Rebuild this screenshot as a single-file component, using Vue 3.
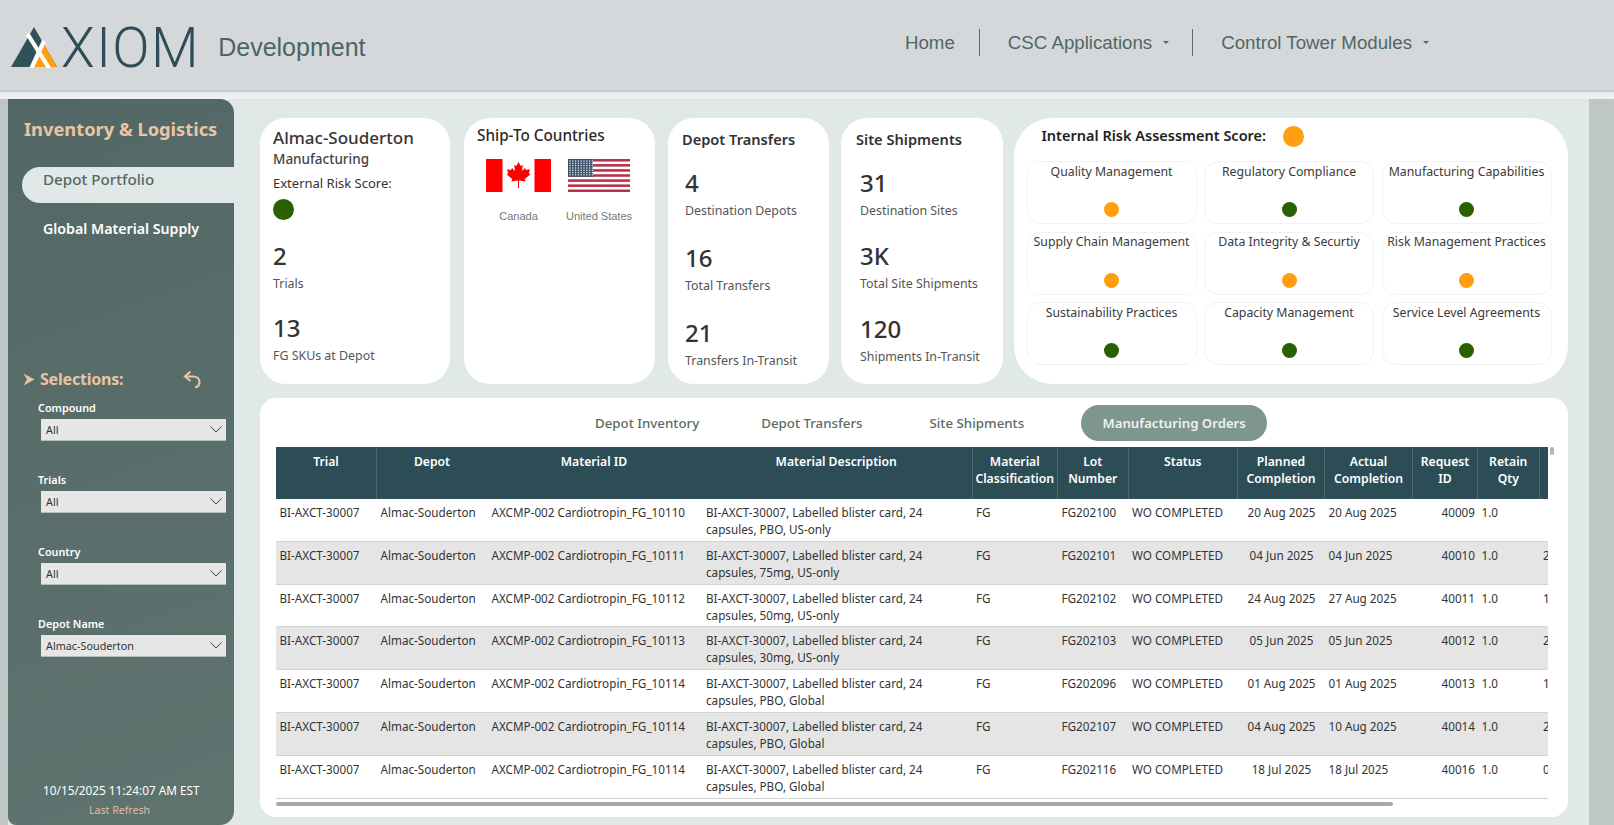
<script setup>
const navItems = [
  { label: 'Home', caret: false },
  { label: 'CSC Applications', caret: true },
  { label: 'Control Tower Modules', caret: true },
]
const filters = [
  { label: 'Compound', value: 'All' },
  { label: 'Trials', value: 'All' },
  { label: 'Country', value: 'All' },
  { label: 'Depot Name', value: 'Almac-Souderton' },
]
const G = '#2a6000'
const O = '#ff9e0f'
const risks = [
  ['Quality Management', O], ['Regulatory Compliance', G], ['Manufacturing Capabilities', G],
  ['Supply Chain Management', O], ['Data Integrity & Securtiy', O], ['Risk Management Practices', O],
  ['Sustainability Practices', G], ['Capacity Management', G], ['Service Level Agreements', G],
]
const transfers = [['4', 'Destination Depots'], ['16', 'Total Transfers'], ['21', 'Transfers In-Transit']]
const shipments = [['31', 'Destination Sites'], ['3K', 'Total Site Shipments'], ['120', 'Shipments In-Transit']]
const tabs = ['Depot Inventory', 'Depot Transfers', 'Site Shipments', 'Manufacturing Orders']
const headers = [
  ['Trial'], ['Depot'], ['Material ID'], ['Material Description'], ['Material', 'Classification'],
  ['Lot', 'Number'], ['Status'], ['Planned', 'Completion'], ['Actual', 'Completion'], ['Request', 'ID'], ['Retain', 'Qty'], [''],
]
const rows = [
  ['10110', 'PBO, US-only', 'FG202100', '20 Aug 2025', '20 Aug 2025', '40009', ''],
  ['10111', '75mg, US-only', 'FG202101', '04 Jun 2025', '04 Jun 2025', '40010', '2'],
  ['10112', '50mg, US-only', 'FG202102', '24 Aug 2025', '27 Aug 2025', '40011', '1'],
  ['10113', '30mg, US-only', 'FG202103', '05 Jun 2025', '05 Jun 2025', '40012', '2'],
  ['10114', 'PBO, Global', 'FG202096', '01 Aug 2025', '01 Aug 2025', '40013', '1'],
  ['10114', 'PBO, Global', 'FG202107', '04 Aug 2025', '10 Aug 2025', '40014', '2'],
  ['10114', 'PBO, Global', 'FG202116', '18 Jul 2025', '18 Jul 2025', '40016', '0'],
]
const usStripes = [0, 1, 2, 3, 4, 5, 6]
const usStars = []
for (let r = 0; r < 7; r++) for (let c = 0; c < 9; c++) usStars.push([2 + c * 2.8, 2 + r * 2.3])
</script>

<template>
  <div class="page">
    <header class="top">
      <div class="brand">
        <svg class="mark" width="48" height="42" viewBox="10 26 48 42">
          <polygon points="34,27 11,67 57,67" fill="#30505a" />
          <polygon points="43.2,43 57,67 32,67" fill="#ff9e0f" />
          <line x1="27.5" y1="34" x2="49" y2="68" stroke="#fff" stroke-width="4.2" />
          <line x1="44" y1="41" x2="31.5" y2="68" stroke="#fff" stroke-width="4.2" />
        </svg>
        <span class="xiom">XIOM</span>
        <span class="env">Development</span>
      </div>
      <nav class="nav">
        <template v-for="(n, i) in navItems" :key="n.label">
          <span v-if="i" class="nav-sep"></span>
          <span class="nav-item">{{ n.label }}<i v-if="n.caret" class="caret"></i></span>
        </template>
      </nav>
    </header>
    <div class="band"></div>

    <div class="body">
      <aside class="side">
        <h2 class="side-title">Inventory &amp; Logistics</h2>
        <div class="pill">Depot Portfolio</div>
        <div class="side-link">Global Material Supply</div>
        <div class="sel-head">
          <svg width="12" height="13" viewBox="0 0 12 13"><path d="M0.5 0.5 L11.5 6.5 L0.5 12.5 L4 6.5 Z" fill="#e8c4a6" /></svg>
          <span class="sel-title">Selections:</span>
          <svg class="undo" width="18" height="19" viewBox="0 0 18 19" fill="none" stroke="#e8c4a6" stroke-width="2.2">
            <path d="M7.5 1.5 L2 6.5 L7.5 11" />
            <path d="M2 6.5 H10 C14 6.5 16.500 9 16.500 12 C16.500 15 14.500 17 12 17.500" />
          </svg>
        </div>
        <div v-for="f in filters" :key="f.label" class="filter">
          <label class="f-label">{{ f.label }}</label>
          <div class="f-box">
            <span>{{ f.value }}</span>
            <svg width="12" height="7" viewBox="0 0 12 7" fill="none" stroke="#444" stroke-width="1"><path d="M0.5 0.5 L6 6 L11.500 0.5" /></svg>
          </div>
        </div>
        <div class="stamp">10/15/2025 11:24:07 AM EST</div>
        <div class="refresh">Last Refresh</div>
      </aside>

      <main class="main">
        <section class="cards">
          <div class="card c1">
            <div class="site">Almac-Souderton</div>
            <div class="site-sub">Manufacturing</div>
            <div class="ext">External Risk Score:</div>
            <span class="dot-lg"></span>
            <div class="num n1">2</div>
            <div class="cap">Trials</div>
            <div class="num n2">13</div>
            <div class="cap">FG SKUs at Depot</div>
          </div>

          <div class="card c2">
            <div class="ship">Ship-To Countries</div>
            <div class="flags">
              <div class="flag">
                <svg width="65" height="33" viewBox="0 0 65 33">
                  <rect width="65" height="33" fill="#fff" />
                  <rect width="16.500" height="33" fill="#f00" />
                  <rect x="48.500" width="16.500" height="33" fill="#f00" />
                  <path d="M32.500 3 L34.800 7 L36.800 6 L36 12 L39 9 L40 11 L44 10.300 L42.800 14.500 L44.500 15.300 L38.800 20 L39.500 22.500 L33 21.500 L33 29 L32 29 L32 21.500 L25.500 22.500 L26.200 20 L20.500 15.300 L22.200 14.500 L21 10.300 L25 11 L26 9 L29 12 L28.200 6 L30.200 7 Z" fill="#f00" />
                </svg>
                <span>Canada</span>
              </div>
              <div class="flag us">
                <svg width="62" height="33" viewBox="0 0 62 33">
                  <rect width="62" height="33" fill="#fff" />
                  <rect v-for="s in usStripes" :key="s" :y="s * 5.08" width="62" height="2.540" fill="#b8304a" />
                  <rect width="25" height="17.800" fill="#3a5068" />
                  <circle v-for="(p, i) in usStars" :key="i" :cx="p[0]" :cy="p[1]" r="0.750" fill="#e8eef0" />
                </svg>
                <span>United States</span>
              </div>
            </div>
          </div>

          <div class="card c3">
            <div class="k-title">Depot Transfers</div>
            <div v-for="t in transfers" :key="t[1]" class="kpi">
              <div class="num">{{ t[0] }}</div>
              <div class="cap">{{ t[1] }}</div>
            </div>
          </div>

          <div class="card c4">
            <div class="k-title">Site Shipments</div>
            <div v-for="t in shipments" :key="t[1]" class="kpi">
              <div class="num">{{ t[0] }}</div>
              <div class="cap">{{ t[1] }}</div>
            </div>
          </div>

          <div class="card c5">
            <div class="risk-head">
              <span>Internal Risk Assessment Score:</span>
              <i class="risk-dot"></i>
            </div>
            <div class="risk-grid">
              <div v-for="r in risks" :key="r[0]" class="tile">
                <span>{{ r[0] }}</span>
                <i :style="{ background: r[1] }"></i>
              </div>
            </div>
          </div>
        </section>

        <section class="panel">
          <div class="tabs">
            <span v-for="t in tabs" :key="t" class="tab" :class="{ active: t === 'Manufacturing Orders' }">{{ t }}</span>
          </div>
          <div class="tbl-wrap">
            <div class="tbl">
              <div class="row head">
                <div v-for="(h, i) in headers" :key="i" class="cell">
                  <span v-for="l in h" :key="l">{{ l }}</span>
                </div>
              </div>
              <div v-for="(r, i) in rows" :key="i" class="row item" :class="{ alt: i % 2 }">
                <div class="cell">BI-AXCT-30007</div>
                <div class="cell">Almac-Souderton</div>
                <div class="cell">AXCMP-002 Cardiotropin_FG_{{ r[0] }}</div>
                <div class="cell desc">BI-AXCT-30007, Labelled blister card, 24 capsules, {{ r[1] }}</div>
                <div class="cell">FG</div>
                <div class="cell">{{ r[2] }}</div>
                <div class="cell">WO COMPLETED</div>
                <div class="cell center">{{ r[3] }}</div>
                <div class="cell">{{ r[4] }}</div>
                <div class="cell right">{{ r[5] }}</div>
                <div class="cell">1.0</div>
                <div class="cell">{{ r[6] }}</div>
              </div>
            </div>
            <div class="vbar"></div>
          </div>
          <div class="hbar"><i></i></div>
        </section>
      </main>
      <div class="gutter"></div>
    </div>
  </div>
</template>

<style>
html, body { margin: 0; background: #e0e9e7; overflow: hidden; }
</style>

<style scoped>
.page { width: 1614px; height: 825px; display: flex; flex-direction: column; font-family: "Noto Sans", "Open Sans", sans-serif; color: #333; overflow: hidden; }
.top { height: 90px; flex: none; background: #d5d8db; display: flex; align-items: flex-start; border-bottom: 2px solid #c9cdcf; }
.band { height: 7px; flex: none; background: linear-gradient(#e6e8e9, #f0f2f2); }
.brand { display: flex; align-items: center; margin-left: 10px; height: 94px; }
.mark { flex: none; }
.xiom { font-family: Roboto, sans-serif; font-weight: 300; font-size: 55px; letter-spacing: 1.500px; color: #2e4e57; margin-left: 3px; line-height: 56px; padding-top: 1px; }
.env { font-family: "Liberation Sans", sans-serif; font-size: 25px; color: #4b6464; margin-left: 18px; }
.nav { display: flex; align-items: center; margin-left: auto; margin-right: 185px; margin-top: 29px; height: 27px; font-family: "Liberation Sans", sans-serif; font-size: 18.700px; color: #4f6862; }
.nav-item { display: inline-flex; align-items: center; }
.nav-item:first-child { margin-right: 1px; }
.nav-sep { width: 1px; height: 27px; background: #5b6d6a; margin: 0 28px 0 23px; }
.caret { width: 0; height: 0; border-left: 3.500px solid transparent; border-right: 3.500px solid transparent; border-top: 3px solid #4f6862; margin-left: 11px; }
.body { flex: 1; display: flex; min-height: 0; background: linear-gradient(90deg, #bfc6c6 8px, #e0e9e7 8px); }
.side { width: 226px; margin-left: 8px; flex: none; box-sizing: border-box; background: linear-gradient(160deg, #536866 0, #5f746f 100%); border-radius: 0 14px 14px 8px; display: flex; flex-direction: column; color: #fff; padding-top: 17px; }
.side-title { margin: 0 0 0 16px; font-size: 18.300px; font-weight: 700; color: #eac5a5; line-height: 26px; white-space: nowrap; }
.pill { margin: 25px 0 0 14px; height: 36px; background: #e0e9e7; border-radius: 18px 0 0 18px; color: #566764; font-size: 15.200px; font-weight: 500; line-height: 24px; padding-left: 21px; }
.side-link { margin: 16px 0 0 35px; font-weight: 600; font-size: 14.200px; line-height: 20px; }
.sel-head { display: flex; align-items: center; margin: 130px 0 6px 15px; height: 20px; }
.sel-title { color: #e8c4a6; font-weight: 700; font-size: 16px; margin-left: 5px; width: 143px; letter-spacing: -0.2px; }
.filter { margin-left: 30px; height: 72px; }
.f-label { display: block; font-size: 10.800px; font-weight: 600; line-height: 16px; margin-top: 5px; }
.f-box { margin: 3px 8px 0 3px; height: 22px; background: #e6e6e6; border-bottom: 1px solid #b5bcba; box-sizing: border-box; display: flex; align-items: center; justify-content: space-between; padding: 0 4px 0 5px; color: #333; font-size: 10.800px; }
.stamp { margin: auto 0 0 35px; font-size: 11.800px; line-height: 18px; white-space: nowrap; }
.refresh { margin: 4px 0 7px 0; padding-left: 81px; font-size: 10.600px; line-height: 15px; color: #e3bc9e; }
.main { width: 1330px; flex: none; padding: 19px 0 8px 26px; box-sizing: border-box; display: flex; flex-direction: column; gap: 14px; min-height: 0; }
.cards { display: flex; height: 266px; flex: none; }
.card { background: #fff; border-radius: 26px; box-sizing: border-box; flex: none; height: 266px; display: flex; flex-direction: column; }
.c1 { width: 190px; margin-right: 14px; padding: 8px 0 0 13px; }
.c2 { width: 191px; margin-right: 13px; padding: 7px 0 0 13px; }
.c3 { width: 161px; margin-right: 12px; padding: 11px 0 0 14px; }
.c4 { width: 162px; margin-right: 11px; padding: 11px 0 0 15px; }
.c5 { width: 554px; padding: 5px 12px 0 12.500px; border-radius: 38px; }
.site { font-size: 17px; font-weight: 500; line-height: 24px; color: #373332; }
.site-sub { font-size: 13.500px; font-weight: 500; line-height: 18px; color: #444; }
.ext { font-size: 13px; line-height: 18px; margin-top: 6px; color: #333; }
.dot-lg { width: 21px; height: 21px; border-radius: 50%; background: #2a6000; margin-top: 7px; display: block; }
.num { font-size: 24px; font-weight: 500; line-height: 32px; color: #333; }
.n1 { margin-top: 20px; }
.n2 { margin-top: 20px; }
.cap { font-size: 12.400px; line-height: 16px; color: #555; margin-top: 4px; white-space: nowrap; }
.ship { font-size: 15.300px; font-weight: 500; line-height: 20px; color: #2d2a28; white-space: nowrap; }
.flags { display: flex; margin: 14px 0 0 9px; gap: 15px; }
.flag { display: flex; flex-direction: column; align-items: center; }
.flag svg { display: block; }
.flag span { font-family: "Liberation Sans", sans-serif; font-size: 11px; color: #777; margin-top: 18px; white-space: nowrap; }
.k-title { font-size: 14.600px; font-weight: 600; line-height: 20px; color: #333; white-space: nowrap; margin-bottom: 18px; }
.kpi { margin-bottom: 23px; padding-left: 3px; }
.c4 .kpi { margin-bottom: 21px; padding-left: 4px; }
.kpi .cap { margin-top: 4px; }
.risk-head { display: flex; align-items: center; height: 24px; margin-bottom: 14px; font-size: 14.500px; font-weight: 600; color: #222; padding-left: 15px; }
.risk-dot { width: 21px; height: 21px; border-radius: 50%; background: #ff9e0f; margin: 2px 0 0 17px; }
.risk-grid { display: grid; grid-template-columns: repeat(3, 170px); grid-auto-rows: 63px; column-gap: 7.500px; row-gap: 7.500px; }
.tile { border: 1px solid #f0f3f2; border-radius: 14px; box-sizing: border-box; display: flex; flex-direction: column; align-items: center; justify-content: space-between; padding: 0.500px 0 6px; font-size: 12.300px; line-height: 17px; white-space: nowrap; color: #3a3a3a; }
.tile i { width: 15px; height: 15px; border-radius: 50%; }
.panel { width: 1308px; height: 419px; flex: none; background: #fff; border-radius: 16px; box-sizing: border-box; padding: 7px 0 0 16px; display: flex; flex-direction: column; }
.tabs { display: flex; align-items: center; height: 36px; margin-bottom: 6px; }
.tab { font-size: 13.300px; font-weight: 500; color: #5a6b66; white-space: nowrap; }
.tab:nth-child(1) { margin-left: 319px; }
.tab:nth-child(2) { margin-left: 62px; }
.tab:nth-child(3) { margin-left: 67px; }
.tab.active { margin-left: 57px; height: 36px; line-height: 36px; width: 186px; text-align: center; background: #7e968e; color: #eef2f0; border-radius: 18px; font-weight: 600; font-size: 13.200px; }
.tbl-wrap { display: flex; }
.tbl { width: 1272px; overflow: hidden; flex: none; font-size: 11.700px; }
.row { display: grid; grid-template-columns: 101px 111px 213px 271.500px 85.500px 70.500px 109.500px 87px 88px 65px 61.500px 40px; width: 1304px; }
.head { background: #2d4d56; height: 52px; color: #fff; font-weight: 600; font-size: 12.200px; line-height: 17px; text-align: center; }
.head .cell { display: flex; flex-direction: column; padding-top: 6px; border-right: 1px solid #4d6a70; box-sizing: border-box; white-space: nowrap; align-items: center; }
.head .cell:nth-child(2), .head .cell:nth-child(3) { border-right-color: transparent; }
.item { height: 42.800px; border-bottom: 1px solid #cfd3d2; box-sizing: border-box; background: #fff; line-height: 17px; color: #333; }
.item.alt { background: #e5e5e5; }
.item .cell { padding: 5px 2px 0 3.500px; white-space: nowrap; box-sizing: border-box; }
.item .cell.desc { white-space: normal; padding-left: 5px; padding-right: 25px; }
.item .cell.right { text-align: right; padding-right: 3px; }
.item .cell.center { text-align: center; padding: 5px 0 0; }
.vbar { width: 4px; height: 8px; background: #b5b5b5; border-radius: 2px; margin-left: 2px; }
.hbar { width: 1272px; height: 4px; margin-top: 3px; }
.hbar i { display: block; width: 1117px; height: 4px; background: #a9a9a9; border-radius: 2px; }
.gutter { flex: 1; background: #bfc6c6; margin-left: 25px; }
</style>
